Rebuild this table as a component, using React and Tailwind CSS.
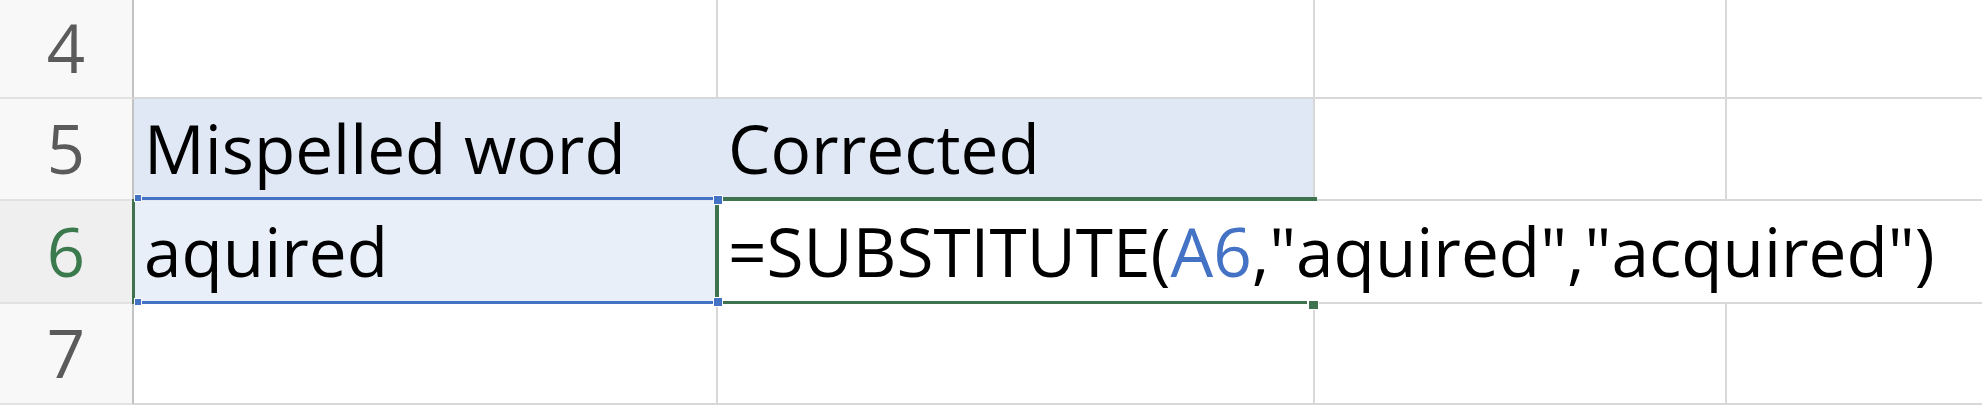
import React from "react";

const GREEN = "bg-[#3f7350]";

function HeaderCell({ n, h, pt, active }) {
  return (
    <div
      className={`${h} w-[134px] shrink-0 border-r-2 border-r-[#c3c3c3] border-b-2 border-b-[#e2e2e2] ${
        active ? "bg-[#efefef] text-[#3a7a4c]" : "bg-[#f8f8f8] text-[#5b5b5b]"
      } flex justify-center ${pt}`}
    >
      <span className="text-[67px] leading-[67px]">{n}</span>
    </div>
  );
}

export default function App() {
  return (
    <div className="relative w-[1982px] h-[405px] overflow-hidden bg-white font-['Open_Sans',sans-serif] text-black">
      {/* Row 4 */}
      <div className="flex h-[99px]">
        <HeaderCell n="4" h="h-[99px]" pt="pt-[14px]" />
        <div className="w-[584px] shrink-0 border-r-2 border-b-2 border-[#d8d8d8]" />
        <div className="w-[597px] shrink-0 border-r-2 border-b-2 border-[#d8d8d8]" />
        <div className="w-[412px] shrink-0 border-r-2 border-b-2 border-[#d8d8d8]" />
        <div className="flex-1 border-b-2 border-[#d8d8d8]" />
      </div>
      {/* Row 5 */}
      <div className="flex h-[102px]">
        <HeaderCell n="5" h="h-[102px]" pt="pt-[16px]" />
        <div className="w-[584px] shrink-0 bg-[#dfe8f4] pl-[10px] pt-[16px]">
          <span className="text-[67.5px] leading-[67px] whitespace-nowrap">Mispelled word</span>
        </div>
        <div className="w-[597px] shrink-0 bg-[#dfe8f4] border-r-2 border-[#d8d8d8] pl-[10px] pt-[16px]">
          <span className="text-[67.5px] leading-[67px] whitespace-nowrap">Corrected</span>
        </div>
        <div className="w-[412px] shrink-0 border-r-2 border-b-2 border-[#d8d8d8]" />
        <div className="flex-1 border-b-2 border-[#d8d8d8]" />
      </div>
      {/* Row 6 */}
      <div className="flex h-[103px]">
        <HeaderCell n="6" h="h-[103px]" pt="pt-[17px]" active />
        <div className="w-[584px] shrink-0 bg-[#e9eff8] pl-[10px] pt-[17px]">
          <span className="text-[67.5px] leading-[67px] whitespace-nowrap">aquired</span>
        </div>
        <div className="relative z-10 w-[597px] shrink-0 pl-[10px] pt-[17px]">
          <span className="text-[67.5px] leading-[67px] whitespace-nowrap">
            =SUBSTITUTE(<span className="text-[#4472c4]">A6</span>,"aquired","acquired")
          </span>
        </div>
        <div className="w-[412px] shrink-0 border-b-2 border-[#d8d8d8]" />
        <div className="flex-1 border-b-2 border-[#d8d8d8]" />
      </div>
      {/* Row 7 */}
      <div className="flex h-[101px]">
        <HeaderCell n="7" h="h-[101px]" pt="pt-[15px]" />
        <div className="w-[584px] shrink-0 border-r-2 border-b-2 border-[#d8d8d8]" />
        <div className="w-[597px] shrink-0 border-r-2 border-b-2 border-[#d8d8d8]" />
        <div className="w-[412px] shrink-0 border-r-2 border-b-2 border-[#d8d8d8]" />
        <div className="flex-1 border-b-2 border-[#d8d8d8]" />
      </div>

      {/* Overlays: selection borders and handles */}
      <div className={`absolute left-[132px] top-[199px] w-[3px] h-[105px] ${GREEN} z-20`} />
      <div className="absolute left-[138px] top-[197px] w-[576px] h-[3px] bg-[#4472c4] z-20" />
      <div className="absolute left-[138px] top-[301px] w-[576px] h-[3px] bg-[#4472c4] z-20" />
      <div className={`absolute left-[715px] top-[197px] w-[4px] h-[107px] ${GREEN} z-20`} />
      <div className={`absolute left-[719px] top-[197px] w-[598px] h-[4px] ${GREEN} z-20`} />
      <div className={`absolute left-[719px] top-[301px] w-[588px] h-[3px] ${GREEN} z-20`} />
      {/* blue handles */}
      <div className="absolute left-[134px] top-[194px] w-[8px] h-[8px] bg-[#4472c4] border border-white z-30" />
      <div className="absolute left-[134px] top-[298px] w-[8px] h-[8px] bg-[#4472c4] border border-white z-30" />
      <div className="absolute left-[713px] top-[195px] w-[10px] h-[10px] bg-[#4472c4] border border-white z-30" />
      <div className="absolute left-[713px] top-[297px] w-[10px] h-[10px] bg-[#4472c4] border border-white z-30" />
      {/* fill handle */}
      <div className={`absolute left-[1308px] top-[300px] w-[11px] h-[10px] ${GREEN} border border-white z-30`} />
    </div>
  );
}
